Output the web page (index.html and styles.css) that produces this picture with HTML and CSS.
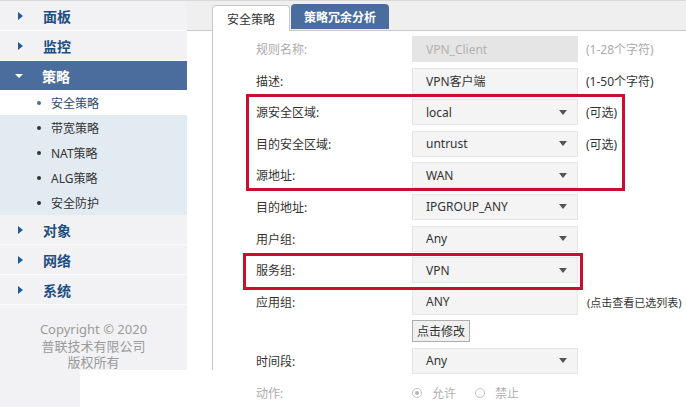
FILE: index.html
```html
<!DOCTYPE html>
<html lang="zh-CN">
<head>
	<meta charset="utf-8">
	<title>安全策略</title>
	<link rel="stylesheet" href="styles.css">
</head>
<body>
<div class="page">
	<aside class="side">
		<ul class="menu">
			<li class="item"><span class="arrow"></span>面板</li>
			<li class="item"><span class="arrow"></span>监控</li>
			<li class="item open"><span class="arrow"></span>策略</li>
			<li class="subwrap">
				<ul class="sub">
					<li class="cur">安全策略</li>
					<li>带宽策略</li>
					<li>NAT策略</li>
					<li>ALG策略</li>
					<li>安全防护</li>
				</ul>
			</li>
			<li class="item"><span class="arrow"></span>对象</li>
			<li class="item"><span class="arrow"></span>网络</li>
			<li class="item"><span class="arrow"></span>系统</li>
		</ul>
		<p class="copy">Copyright © 2020<br>普联技术有限公司<br>版权所有</p>
	</aside>

	<main class="main">
		<div class="tabs">
			<span class="tab cur">安全策略</span>
			<span class="tab alt">策略冗余分析</span>
		</div>
		<div class="panel">
			<form class="form">
				<div class="row">
					<label class="lbl off">规则名称:</label>
					<input class="field dis" type="text" value="VPN_Client" disabled>
					<span class="hint off">(1-28个字符)</span>
				</div>
				<div class="row">
					<label class="lbl">描述:</label>
					<input class="field" type="text" value="VPN客户端">
					<span class="hint">(1-50个字符)</span>
				</div>
				<div class="row">
					<label class="lbl">源安全区域:</label>
					<div class="field sel">local<i class="caret"></i></div>
					<span class="hint">(可选)</span>
				</div>
				<div class="row">
					<label class="lbl">目的安全区域:</label>
					<div class="field sel">untrust<i class="caret"></i></div>
					<span class="hint">(可选)</span>
				</div>
				<div class="row">
					<label class="lbl">源地址:</label>
					<div class="field sel">WAN<i class="caret"></i></div>
				</div>
				<div class="row">
					<label class="lbl">目的地址:</label>
					<div class="field sel">IPGROUP_ANY<i class="caret"></i></div>
				</div>
				<div class="row">
					<label class="lbl">用户组:</label>
					<div class="field sel">Any<i class="caret"></i></div>
				</div>
				<div class="row">
					<label class="lbl">服务组:</label>
					<div class="field sel">VPN<i class="caret"></i></div>
				</div>
				<div class="row">
					<label class="lbl">应用组:</label>
					<input class="field" type="text" value="ANY">
					<span class="hint link">(点击查看已选列表)</span>
				</div>
				<div class="row short">
					<span class="lbl"></span>
					<button class="btn" type="button">点击修改</button>
				</div>
				<div class="row">
					<label class="lbl">时间段:</label>
					<div class="field sel">Any<i class="caret"></i></div>
				</div>
				<div class="row">
					<label class="lbl off">动作:</label>
					<span class="radio on"></span><span class="rtext">允许</span>
					<span class="radio"></span><span class="rtext">禁止</span>
				</div>
			</form>
			<!-- 红框标注 -->
			<div class="mark m1"></div>
			<div class="mark m2"></div>
		</div>
	</main>
</div>
</body>
</html>
```

FILE: styles.css
```css
*{
	box-sizing: border-box;
}
html, body{
	margin: 0;
	padding: 0;
	background: #fff;
}
body{
	width: 686px;
	height: 407px;
	overflow: hidden;
	font-family: "Noto Sans", "Noto Sans CJK SC", sans-serif;
	font-size: 12px;
	color: #333;
}
.page{
	display: flex;
	align-items: flex-start;
}

/* 左侧菜单 */
.side{
	position: relative;
	width: 187px;
	height: 370px;
	flex: none;
	background: #f2f2f4;
}
.side::after{
	content: "";
	position: absolute;
	left: 0;
	top: 100%;
	width: 80px;
	height: 37px;
	background: #f2f2f4;
}
.menu, .sub{
	list-style: none;
	margin: 0;
	padding: 0;
}
.menu{
	border-top: 1px solid #d9d9dc;
}
.item{
	display: flex;
	align-items: center;
	height: 30px;
	border-bottom: 1px solid #fbfbfc;
	font-size: 14px;
	font-weight: bold;
	color: #1f4e82;
}
.arrow{
	width: 0;
	height: 0;
	margin: 0 20px 0 18px;
	border-top: 4px solid transparent;
	border-bottom: 4px solid transparent;
	border-left: 5px solid #1c5b99;
}
.item.open{
	background: #4a6d9d;
	color: #fff;
	border-bottom: 0;
	height: 29px;
}
.item.open .arrow{
	margin: 0 19px 0 15px;
	border-left: 4px solid transparent;
	border-right: 4px solid transparent;
	border-top: 4px solid #fff;
	border-bottom: 0;
}
.sub li{
	display: flex;
	align-items: center;
	height: 25px;
	padding-left: 51px;
	background: #e3ebf2;
	position: relative;
	font-size: 12px;
	color: #333;
}
.sub li::before{
	content: "";
	position: absolute;
	left: 37px;
	top: 11px;
	width: 4px;
	height: 4px;
	border-radius: 50%;
	background: #333;
}
.sub li.cur{
	background: #fff;
	color: #2c4a6e;
}
.sub li.cur::before{
	background: #4a6d9d;
}
.copy{
	margin: 0;
	padding-top: 16px;
	text-align: center;
	font-size: 13px;
	line-height: 16.5px;
	color: #9a9a9a;
}

/* 右侧内容 */
.main{
	flex: 1;
	min-width: 0;
}
.tabs{
	display: flex;
	align-items: flex-end;
	gap: 1px;
	height: 31px;
	padding-left: 25px;
	background: #efefef;
	border-top: 1px solid #d9d9d9;
	border-bottom: 1px solid #c9c9c9;
}
.tab{
	display: flex;
	align-items: center;
	justify-content: center;
	border-radius: 4px 4px 0 0;
	font-size: 12px;
}
.tab.cur{
	width: 78px;
	height: 26px;
	margin-bottom: -1px;
	background: #fff;
	border: 1px solid #c9c9c9;
	border-bottom: 0;
	color: #333;
}
.tab.alt{
	width: 98px;
	height: 25px;
	margin-bottom: 1px;
	background: #4a6d9d;
	color: #fff;
	font-weight: bold;
}
.panel{
	position: relative;
	height: 339px;
	margin-left: 25px;
	border-left: 1px solid #c9c9c9;
}
.form{
	display: flex;
	flex-direction: column;
	gap: 5.6px;
	padding: 5px 0 0 43px;
}
.row{
	display: flex;
	align-items: center;
	height: 26px;
	white-space: nowrap;
}
.row.short{
	height: 22px;
}
.lbl{
	width: 156px;
	flex: none;
	color: #333;
}
.off{
	color: #ababab;
}
.field{
	width: 166px;
	height: 26px;
	flex: none;
	padding: 0 0 0 13px;
	margin: 0;
	background: #f4f4f4;
	border: 1px solid #e6e6e6;
	font-family: inherit;
	font-size: 12px;
	color: #333;
	outline: none;
}
.field.dis{
	background: #e5e5e5;
	border-color: #e5e5e5;
	color: #b2b2b2;
}
.sel{
	display: flex;
	align-items: center;
	justify-content: space-between;
	padding-right: 10px;
}
.caret{
	width: 0;
	height: 0;
	border-left: 4px solid transparent;
	border-right: 4px solid transparent;
	border-top: 5px solid #555;
}
.hint{
	flex: none;
	margin-left: 8px;
	color: #333;
}
.hint.off{
	color: #ababab;
}
.hint.link{
	margin-left: 9px;
	font-size: 11px;
	cursor: pointer;
}
.btn{
	width: 58px;
	height: 22px;
	padding: 0;
	background: #f0f0f0;
	border: 1px solid #adadad;
	font-family: inherit;
	font-size: 12px;
	color: #333;
}
.radio{
	position: relative;
	flex: none;
	width: 10px;
	height: 10px;
	border: 1px solid #c2c2c2;
	border-radius: 50%;
	background: #fff;
}
.radio.on::after{
	content: "";
	position: absolute;
	left: 2px;
	top: 2px;
	width: 4px;
	height: 4px;
	border-radius: 50%;
	background: #b5b5b5;
}
.rtext{
	margin: 0 19px 0 10px;
	color: #b0b0b0;
}

/* 标注框 */
.mark{
	position: absolute;
	border: 3px solid #c8102e;
}
.m1{
	left: 33px;
	top: 63px;
	width: 379px;
	height: 97px;
}
.m2{
	left: 30px;
	top: 222px;
	width: 340px;
	height: 37px;
}
```
